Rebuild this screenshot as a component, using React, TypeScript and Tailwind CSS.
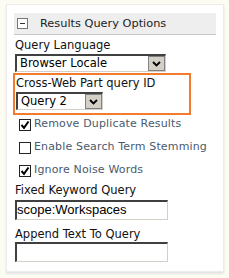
import React from "react";

const font = { fontFamily: '"DejaVu Sans", Verdana, sans-serif' };

function Check({ checked }: { checked: boolean }) {
  return (
    <span className="w-[12px] h-[12px] border border-[#222] bg-white flex items-center justify-center shrink-0">
      {checked && (
        <svg width="10" height="10" viewBox="0 0 10 10">
          <path d="M1.5 5 L4 7.8 L8.5 1.5" fill="none" stroke="#000" strokeWidth="2" />
        </svg>
      )}
    </span>
  );
}

function Select({ value, w }: { value: string; w: string }) {
  return (
    <div className={`${w} h-[18px] flex border-t-2 border-l-2 border-[#404040] border-r border-b border-r-[#d4d0c8] border-b-[#d4d0c8] bg-white`}>
      <div className="flex-1 pl-[3px] text-[11.5px] leading-[15px] text-black">{value}</div>
      <div className="w-[17px] h-full bg-[#d4d0c8] border border-[#808080] flex items-center justify-center">
        <svg width="9" height="6" viewBox="0 0 9 6">
          <path d="M1 1 L4.5 4.5 L8 1" fill="none" stroke="#000" strokeWidth="1.8" />
        </svg>
      </div>
    </div>
  );
}

export default function App() {
  return (
    <div className="w-[229px] h-[278px] bg-[#fcfcf3] pt-[4px] pl-[6px]" style={font}>
      <div className="w-[218px] h-[268px] bg-white border border-[#ececec] shadow-[0_2px_2px_#e4e4e4] pt-[8px] px-[7px]">
        <div className="h-[22px] bg-[#eeeeee] border-b border-[#c8c8c8] flex items-center pl-[3px]">
          <span className="w-[11px] h-[11px] border border-[#777] bg-white flex items-center justify-center">
            <span className="w-[5px] h-[1px] bg-[#333]" />
          </span>
          <span className="ml-[12px] text-[11.33px] text-[#222]">Results Query Options</span>
        </div>
        <div className="pl-[1px] pt-[3px] text-[11.5px] text-[#111]">
          <div className="leading-[14px]">Query Language</div>
          <div className="mt-[2px]">
            <Select value="Browser Locale" w="w-[151px]" />
          </div>
          <div className="mt-[1px] -ml-[2px] w-[178px] border-2 border-[#f47b2c] pl-[1px] pt-[1px] pb-[3px]">
            <div className="leading-[14px]">Cross-Web Part query ID</div>
            <div className="mt-[2px]">
              <Select value="Query 2" w="w-[87px]" />
            </div>
          </div>
          <div className="pl-[4px] mt-[3px] flex flex-col gap-[10px] text-[#4a5a6e] text-[11px] tracking-[0.15px]">
            <div className="flex items-center gap-[3px] h-[13px]">
              <Check checked />
              <span>Remove Duplicate Results</span>
            </div>
            <div className="flex items-center gap-[3px] h-[13px]">
              <Check checked={false} />
              <span>Enable Search Term Stemming</span>
            </div>
            <div className="flex items-center gap-[3px] h-[13px]">
              <Check checked />
              <span>Ignore Noise Words</span>
            </div>
          </div>
          <div className="leading-[14px] mt-[6px]">Fixed Keyword Query</div>
          <div className="mt-[3px] w-[153px] h-[20px] border-t-2 border-l-2 border-[#404040] border-r border-b border-r-[#d4d0c8] border-b-[#d4d0c8] bg-white text-[13px] leading-[16px] text-black" style={{ fontFamily: '"Liberation Sans", Arial, sans-serif' }}>
            scope:Workspaces
          </div>
          <div className="leading-[14px] mt-[7px]">Append Text To Query</div>
          <div className="mt-[1px] w-[153px] h-[20px] border-t-2 border-l-2 border-[#404040] border-r border-b border-r-[#d4d0c8] border-b-[#d4d0c8] bg-white" />
        </div>
      </div>
    </div>
  );
}
